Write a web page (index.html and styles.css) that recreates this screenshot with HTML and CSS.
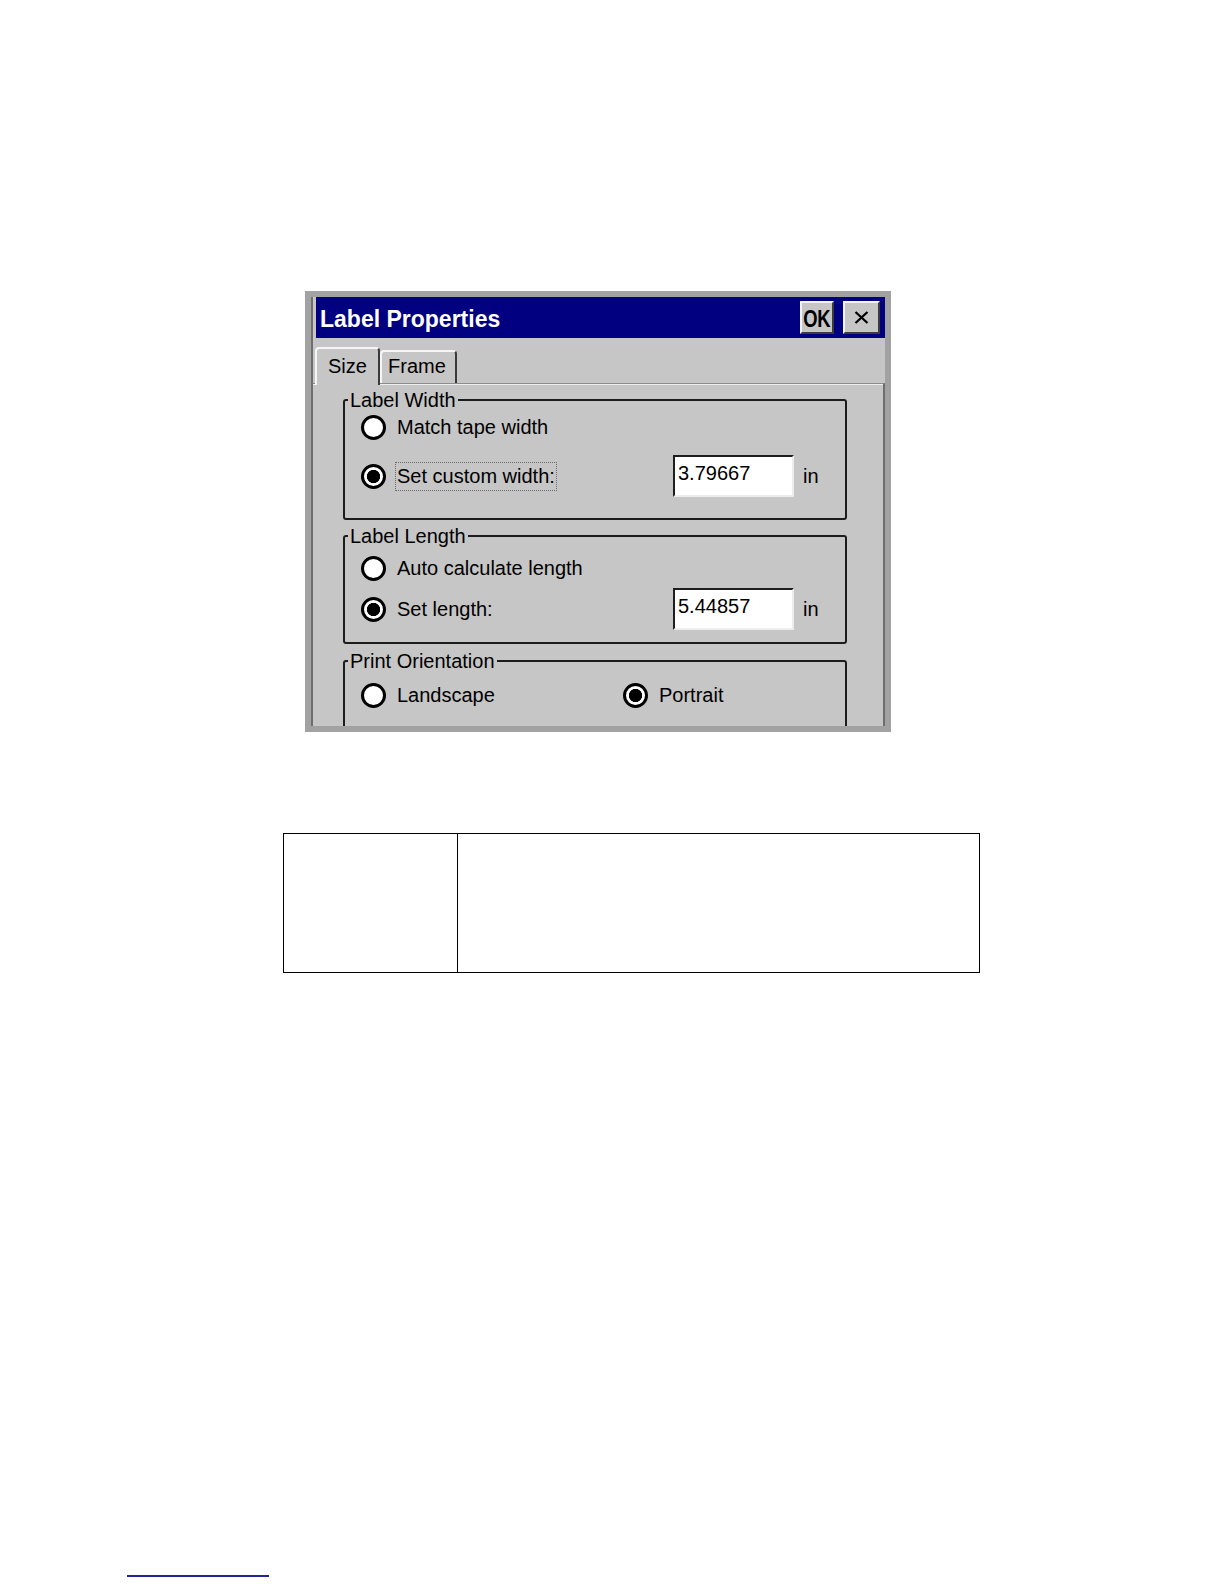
FILE: index.html
```
<!DOCTYPE html>
<html lang="en">
<head>
<meta charset="utf-8">
<title>Label Properties</title>
<link rel="stylesheet" href="styles.css">
</head>
<body>
<div class="page">
  <div class="dialog">
    <div class="window">
      <div class="titlebar">
        <span class="title">Label Properties</span>
        <div class="tb-buttons">
          <div class="tb-btn ok"><span class="ok-text">OK</span></div>
          <div class="tb-btn close">
            <svg width="15" height="13" viewBox="0 0 15 13"><path d="M1.5 1 L13.5 12 M13.5 1 L1.5 12" stroke="#000" stroke-width="2.3" fill="none"/></svg>
          </div>
        </div>
      </div>
      <div class="tabs">
        <div class="tab active">Size</div>
        <div class="tab">Frame</div>
      </div>
      <div class="panel">
        <fieldset class="group g1">
          <legend>Label Width</legend>
          <div class="row r-short r1">
            <span class="radio"></span><span class="label">Match tape width</span>
          </div>
          <div class="row r-input g1r2">
            <span class="radio checked"></span><span class="label focus">Set custom width:</span>
            <span class="field">3.79667</span><span class="unit">in</span>
          </div>
        </fieldset>
        <fieldset class="group g2">
          <legend>Label Length</legend>
          <div class="row r-short g2r1">
            <span class="radio"></span><span class="label">Auto calculate length</span>
          </div>
          <div class="row r-input g2r2">
            <span class="radio checked"></span><span class="label">Set length:</span>
            <span class="field">5.44857</span><span class="unit">in</span>
          </div>
        </fieldset>
        <fieldset class="group g3">
          <legend>Print Orientation</legend>
          <div class="row r-short g3r1">
            <div class="opt"><span class="radio"></span><span class="label">Landscape</span></div>
            <div class="opt"><span class="radio checked"></span><span class="label">Portrait</span></div>
          </div>
        </fieldset>
      </div>
    </div>
  </div>

  <div class="info">
    <div class="c1"></div>
    <div class="c2"></div>
  </div>

  <div class="footnote-rule"></div>
</div>
</body>
</html>
```

FILE: styles.css
```
html, body {
  margin: 0;
  padding: 0;
  background: #ffffff;
}

.page {
  padding-top: 291px;
  font-family: "Liberation Sans", Arial, sans-serif;
}

.dialog {
  margin-left: 305px;
  width: 586px;
  height: 441px;
  box-sizing: border-box;
  border: 6px solid #a2a2a2;
  background: #c6c6c6;
  overflow: hidden;
  font-size: 20px;
  color: #000;
}

.window {
  height: 100%;
  border-left: 2px solid #6e6e6e;
  display: flex;
  flex-direction: column;
}

.titlebar {
  height: 41px;
  flex: none;
  margin-left: 3px;
  background: #000080;
  display: flex;
  align-items: center;
  justify-content: space-between;
  padding: 0 5px 0 4px;
}

.title {
  color: #ffffff;
  font-weight: bold;
  font-size: 23px;
  padding-top: 4px;
}

.tb-buttons {
  display: flex;
  gap: 9px;
}

.tb-btn {
  height: 33px;
  box-sizing: border-box;
  background: #c6c6c6;
  border: 2px solid;
  border-color: #f4f4f4 #3c3c3c #3c3c3c #f4f4f4;
  display: flex;
  align-items: center;
  justify-content: center;
}

.ok {
  width: 34px;
  overflow: hidden;
}

.ok-text {
  display: inline-block;
  font-weight: bold;
  font-size: 23px;
  line-height: 24px;
  letter-spacing: -0.5px;
  transform: scaleX(0.8);
  padding-top: 2px;
}

.close {
  width: 37px;
}

.tabs {
  height: 45px;
  flex: none;
  display: flex;
  align-items: flex-end;
  padding-left: 2px;
  box-sizing: border-box;
}

.tab {
  height: 33px;
  width: 77px;
  box-sizing: border-box;
  border: 2px solid;
  border-bottom: none;
  border-color: #f6f6f6 #3a3a3a transparent #f6f6f6;
  border-radius: 4px 4px 0 0;
  padding: 4px 0 0 6px;
  line-height: 20px;
}

.tab.active {
  height: 38px;
  width: 65px;
  margin-bottom: -2px;
  padding: 7px 0 0 11px;
  position: relative;
  z-index: 1;
  background: #c6c6c6;
}

.panel {
  flex: 1;
  border-top: 1px solid #8c8c8c;
  box-shadow: inset 0 1px 0 #efefef;
  border-right: 2px solid #6e6e6e;
  padding: 6px 0 0 30px;
}

.group {
  margin: 0;
  padding: 0 16px;
  border: 2px solid #1c1c1c;
  border-radius: 3px;
  width: 504px;
  min-width: 0;
  box-sizing: border-box;
}

.group legend {
  padding: 0 2px;
  margin-left: -13px;
  line-height: 20px;
  font-size: 20px;
}

.g1 { height: 130px; }
.g2 { height: 118px; margin-top: 6px; }
.g3 { height: 130px; margin-top: 7px; }

.row {
  display: flex;
  align-items: center;
}

.r-short { height: 34px; }
.r-input { height: 42px; }

.g1r2 { margin-top: 11px; }
.g2r1 { margin-top: 5px; }
.g2r2 { margin-top: 3px; }
.g3r1 { margin-top: 7px; }

.opt {
  flex: none;
  width: 262px;
  display: flex;
  align-items: center;
}

.radio {
  flex: none;
  width: 25px;
  height: 25px;
  box-sizing: border-box;
  border-radius: 50%;
  border: 3px solid #000;
  background: #ffffff;
}

.radio.checked {
  background: radial-gradient(circle, #000 0 6.3px, #ffffff 6.9px);
}

.label {
  margin-left: 9px;
  padding: 0 1px;
  border: 1px dotted transparent;
  line-height: 27px;
  white-space: nowrap;
}

.label.focus {
  border-color: #6a6a6a;
}

.field {
  margin-left: auto;
  width: 121px;
  height: 42px;
  box-sizing: border-box;
  background: #ffffff;
  border: 2px solid;
  border-color: #1e1e1e #ededed #ededed #1e1e1e;
  padding: 4px 0 0 3px;
  line-height: 24px;
}

.unit {
  flex: none;
  width: 26px;
  margin-left: 9px;
  line-height: 20px;
}

.info {
  margin-top: 101px;
  margin-left: 283px;
  width: 697px;
  height: 140px;
  box-sizing: border-box;
  border: 1px solid #000;
  display: grid;
  grid-template-columns: 174px 1fr;
}

.info .c1 {
  border-right: 1px solid #000;
}

.footnote-rule {
  margin-top: 602px;
  margin-left: 127px;
  width: 142px;
  height: 2px;
  background: #23239a;
}
```
